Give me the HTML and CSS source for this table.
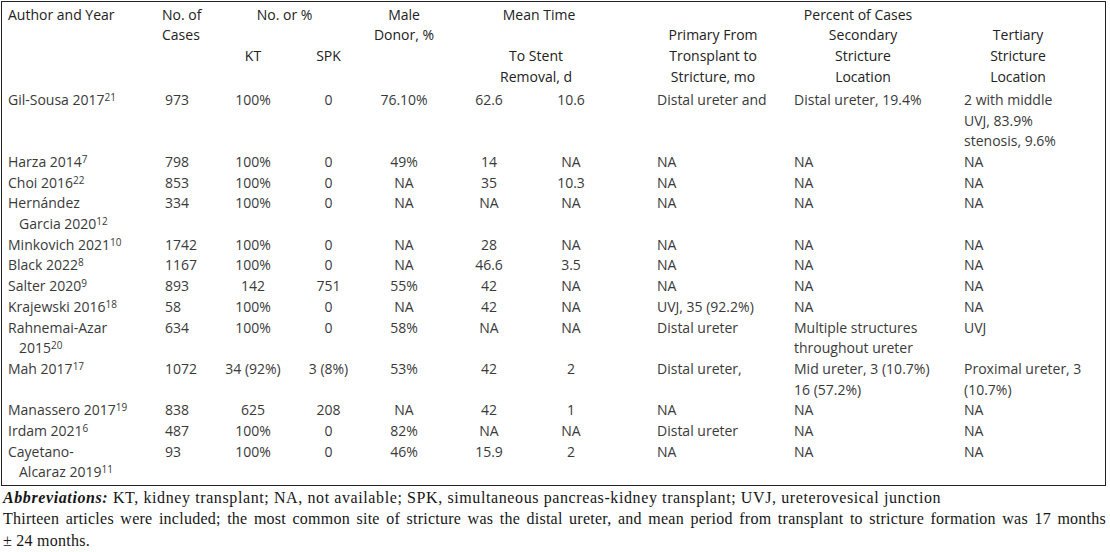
FILE: index.html
```html
<!DOCTYPE html>
<html lang="en">
<head>
<meta charset="utf-8">
<title>Ureteral stricture studies</title>
<link rel="stylesheet" href="styles.css">
</head>
<body>
<div class="table-box">
<table class="data">
  <colgroup>
    <col class="c-author"><col class="c-cases"><col class="c-kt"><col class="c-spk"><col class="c-male">
    <col class="c-mean1"><col class="c-mean2"><col class="c-prim"><col class="c-sec"><col class="c-ter">
  </colgroup>
  <thead>
    <tr>
      <th rowspan="2" class="author">Author and Year</th>
      <th rowspan="2" class="cases-h">No. of<br>Cases</th>
      <th colspan="2" class="nopct">No. or %</th>
      <th rowspan="2">Male<br>Donor, %</th>
      <th colspan="2" class="mean-h">Mean Time</th>
      <th colspan="3" class="pct-h">Percent of Cases</th>
    </tr>
    <tr class="sub">
      <th class="second">KT</th>
      <th class="second">SPK</th>
      <th colspan="2" class="stent-h">To Stent<br>Removal, d</th>
      <th class="prim-h">Primary From<br>Tronsplant to<br>Stricture, mo</th>
      <th class="sec-h">Secondary<br>Stricture<br>Location</th>
      <th class="ter-h">Tertiary<br>Stricture<br>Location</th>
    </tr>
  </thead>
  <tbody>
    <tr><td class="author">Gil-Sousa 2017<sup>21</sup></td><td class="cases">973</td><td>100%</td><td>0</td><td>76.10%</td><td>62.6</td><td>10.6</td><td class="prim">Distal ureter and</td><td class="sec">Distal ureter, 19.4%</td><td class="ter">2 with middle<br>UVJ, 83.9%<br>stenosis, 9.6%</td></tr>
    <tr><td class="author">Harza 2014<sup>7</sup></td><td class="cases">798</td><td>100%</td><td>0</td><td>49%</td><td>14</td><td>NA</td><td class="prim">NA</td><td class="sec">NA</td><td class="ter">NA</td></tr>
    <tr><td class="author">Choi 2016<sup>22</sup></td><td class="cases">853</td><td>100%</td><td>0</td><td>NA</td><td>35</td><td>10.3</td><td class="prim">NA</td><td class="sec">NA</td><td class="ter">NA</td></tr>
    <tr><td class="author">Hernández<br>Garcia 2020<sup>12</sup></td><td class="cases">334</td><td>100%</td><td>0</td><td>NA</td><td>NA</td><td>NA</td><td class="prim">NA</td><td class="sec">NA</td><td class="ter">NA</td></tr>
    <tr><td class="author">Minkovich 2021<sup>10</sup></td><td class="cases">1742</td><td>100%</td><td>0</td><td>NA</td><td>28</td><td>NA</td><td class="prim">NA</td><td class="sec">NA</td><td class="ter">NA</td></tr>
    <tr><td class="author">Black 2022<sup>8</sup></td><td class="cases">1167</td><td>100%</td><td>0</td><td>NA</td><td>46.6</td><td>3.5</td><td class="prim">NA</td><td class="sec">NA</td><td class="ter">NA</td></tr>
    <tr><td class="author">Salter 2020<sup>9</sup></td><td class="cases">893</td><td>142</td><td>751</td><td>55%</td><td>42</td><td>NA</td><td class="prim">NA</td><td class="sec">NA</td><td class="ter">NA</td></tr>
    <tr><td class="author">Krajewski 2016<sup>18</sup></td><td class="cases">58</td><td>100%</td><td>0</td><td>NA</td><td>42</td><td>NA</td><td class="prim">UVJ, 35 (92.2%)</td><td class="sec">NA</td><td class="ter">NA</td></tr>
    <tr><td class="author">Rahnemai-Azar<br>2015<sup>20</sup></td><td class="cases">634</td><td>100%</td><td>0</td><td>58%</td><td>NA</td><td>NA</td><td class="prim">Distal ureter</td><td class="sec">Multiple structures<br>throughout ureter</td><td class="ter">UVJ</td></tr>
    <tr><td class="author">Mah 2017<sup>17</sup></td><td class="cases">1072</td><td>34 (92%)</td><td>3 (8%)</td><td>53%</td><td>42</td><td>2</td><td class="prim">Distal ureter,</td><td class="sec">Mid ureter, 3 (10.7%)<br>16 (57.2%)</td><td class="ter">Proximal ureter, 3<br>(10.7%)</td></tr>
    <tr><td class="author">Manassero 2017<sup>19</sup></td><td class="cases">838</td><td>625</td><td>208</td><td>NA</td><td>42</td><td>1</td><td class="prim">NA</td><td class="sec">NA</td><td class="ter">NA</td></tr>
    <tr><td class="author">Irdam 2021<sup>6</sup></td><td class="cases">487</td><td>100%</td><td>0</td><td>82%</td><td>NA</td><td>NA</td><td class="prim">Distal ureter</td><td class="sec">NA</td><td class="ter">NA</td></tr>
    <tr><td class="author">Cayetano-<br>Alcaraz 2019<sup>11</sup></td><td class="cases">93</td><td>100%</td><td>0</td><td>46%</td><td>15.9</td><td>2</td><td class="prim">NA</td><td class="sec">NA</td><td class="ter">NA</td></tr>
  </tbody>
</table>
</div>
<div class="notes">
  <p class="abbr"><b><i>Abbreviations:</i></b> KT, kidney transplant; NA, not available; SPK, simultaneous pancreas-kidney transplant; UVJ, ureterovesical junction</p>
  <p class="justify">Thirteen articles were included; the most common site of stricture was the distal ureter, and mean period from transplant to stricture formation was 17 months ±&nbsp;24&nbsp;months.</p>
</div>
</body>
</html>
```
FILE: styles.css
```css
html, body {
  background: #ffffff;
}
body {
  margin: 0;
  padding: 1px;
}
.table-box {
  width: 1105px;
  box-sizing: border-box;
  border: 1px solid #222222;
  padding: 2.6px 0 1.5px;
}
.data {
  border-collapse: collapse;
  table-layout: fixed;
  width: 1103px;
  font-family: "Open Sans", "Noto Sans", sans-serif;
  font-size: 14px;
  line-height: 20.7px;
  color: #3a3a3a;
}
.data th, .data td {
  padding: 0;
  vertical-align: top;
  text-align: center;
  white-space: nowrap;
}
.data th {
  font-weight: 500;
  color: #222222;
}
.c-author { width: 156px; }
.c-cases { width: 57px; }
.c-kt { width: 76px; }
.c-spk { width: 75px; }
.c-male { width: 76px; }
.c-mean1 { width: 94px; }
.c-mean2 { width: 70px; }
.c-prim { width: 182px; }
.c-sec { width: 170px; }
.c-ter { width: 147px; }

.data .author {
  text-align: left;
  padding-left: 17px;
  text-indent: -11px;
}
.data .cases-h {
  text-align: left;
  padding-left: 4px;
}
.data .cases {
  text-align: left;
  padding-left: 7px;
}
.data .nopct { padding-right: 12px; }
.data .mean-h { padding-left: 30px; }
.data .pct-h { padding-left: 5px; }
.data .sub th { padding-bottom: 2.4px; }
.data .sub .second { padding-top: 20.7px; }
.data .stent-h {
  vertical-align: bottom;
  padding-left: 24px;
}
.data .prim-h { padding-left: 51px; padding-right: 19px; }
.data .sec-h { padding-left: 6px; padding-right: 26px; }
.data .ter-h { padding-left: 6px; padding-right: 33px; }
.data .prim { text-align: left; padding-left: 51px; }
.data .sec { text-align: left; padding-left: 6px; }
.data .ter { text-align: left; padding-left: 6px; }
.data sup {
  font-size: 10px;
  line-height: 0;
  vertical-align: 4px;
}

.notes {
  width: 1105px;
  padding-top: 1px;
  font-family: "Liberation Serif", "Times New Roman", serif;
  font-size: 16px;
  letter-spacing: 0.25px;
  line-height: 21.5px;
  color: #161616;
}
.notes p {
  margin: 0;
  padding-left: 2px;
}
.notes .abbr {
  letter-spacing: 0.6px;
}
.notes .justify {
  text-align: justify;
}
```
